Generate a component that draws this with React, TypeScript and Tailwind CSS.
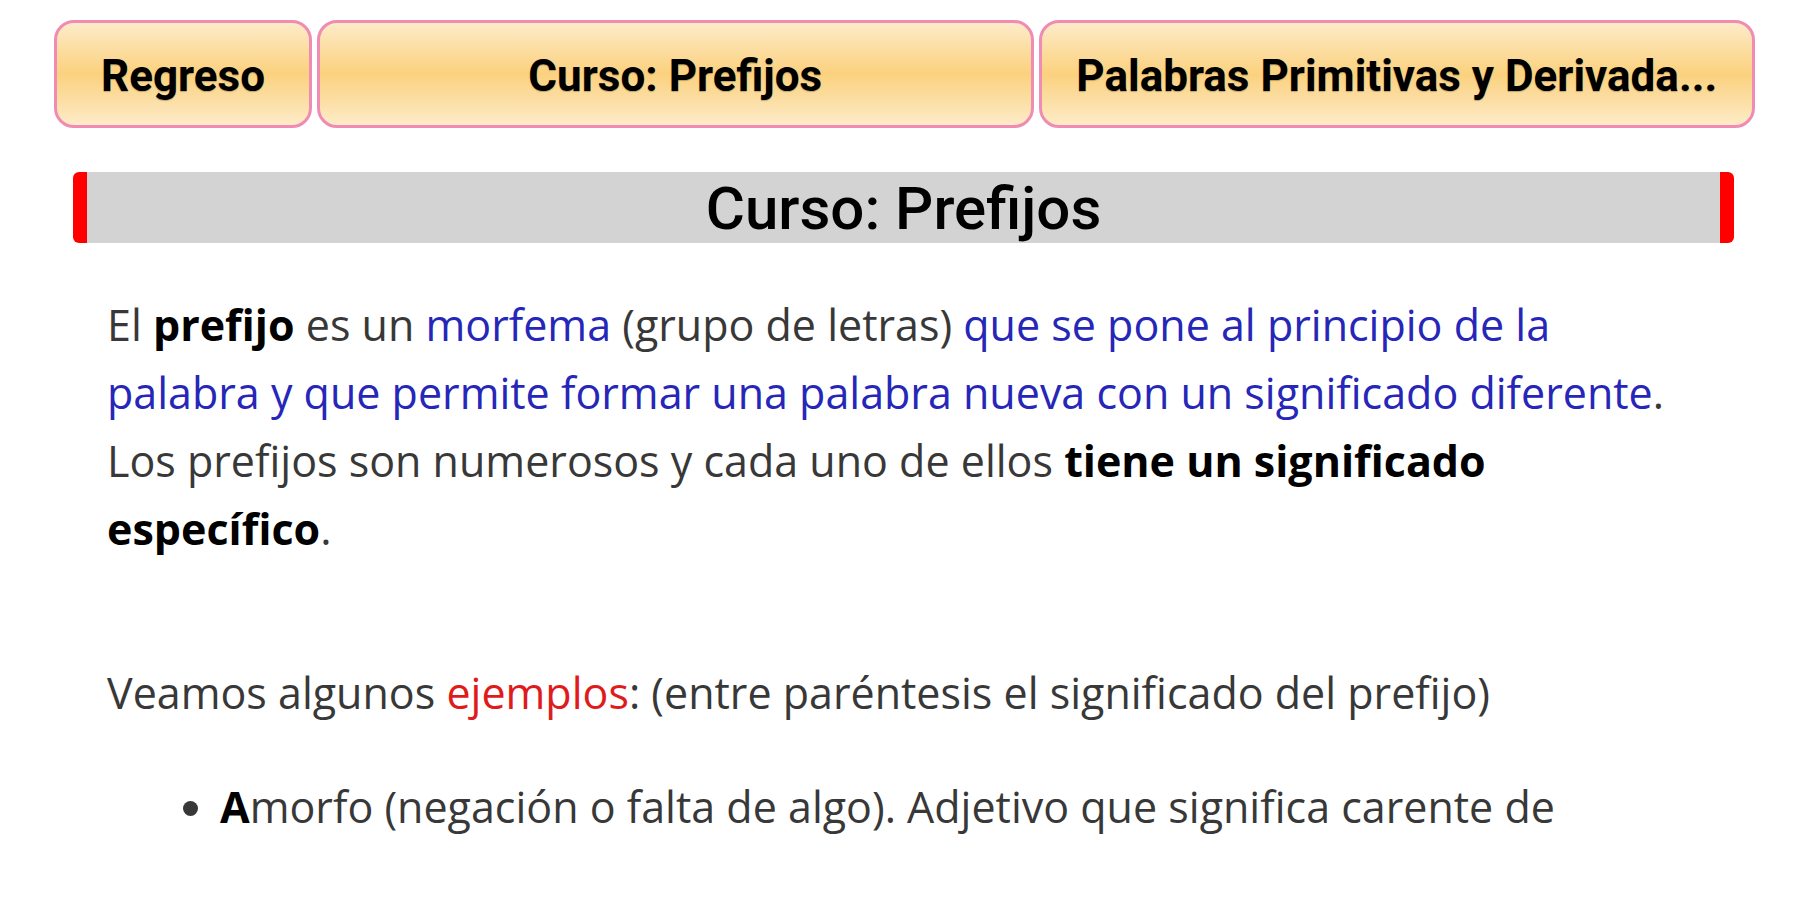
import React from "react";

const btn =
  "flex items-center justify-center pt-[4px] h-[108px] rounded-[20px] border-[3px] border-[#f08cb4] bg-[linear-gradient(to_bottom,#fdebc8_0%,#fbd17e_50%,#fdebc8_100%)] text-[44px] font-bold text-black whitespace-nowrap overflow-hidden [text-shadow:0_1px_1px_rgba(0,0,0,0.25)]";

export default function App() {
  return (
    <div className="w-[1800px] h-[900px] overflow-hidden bg-white">
      <div className="flex gap-[5px] pl-[54px] pr-[45px] pt-[20px] font-['Roboto',sans-serif]">
        <div className={btn + " w-[258px]"}>Regreso</div>
        <div className={btn + " flex-1"}>Curso: Prefijos</div>
        <div className={btn + " flex-1"}>Palabras Primitivas y Derivada...</div>
      </div>
      <div className="ml-[73px] mr-[66px] mt-[44px] h-[71px] bg-[#d3d3d3] border-x-[14px] border-[#ff0000] rounded-[6px] flex items-center justify-center font-['Roboto',sans-serif] font-medium text-[60px] leading-none pt-[2px] text-black">
        Curso: Prefijos
      </div>
      <div className="pl-[107px] pr-[113px] pt-[48px] font-['Open_Sans',sans-serif] font-normal text-[43px] leading-[68px] text-[#383838]">
        <p>
          El <b className="font-bold text-black">prefijo</b> es un{" "}
          <span className="text-[#2626b8]">morfema</span> (grupo de letras){" "}
          <span className="text-[#2626b8]">
            que se pone al principio de la palabra y que permite formar una palabra nueva con un significado diferente
          </span>
          . Los prefijos son numerosos y cada uno de ellos{" "}
          <b className="font-bold text-black">tiene un significado específico</b>.
        </p>
        <p className="mt-[96px]">
          Veamos algunos <span className="text-[#e01b1b]">ejemplos</span>: (entre paréntesis el significado del prefijo)
        </p>
        <ul className="list-disc pl-[113px] mt-[46px]">
          <li>
            <b className="font-bold text-black">A</b>morfo (negación o falta de algo). Adjetivo que significa carente de
          </li>
        </ul>
      </div>
    </div>
  );
}
